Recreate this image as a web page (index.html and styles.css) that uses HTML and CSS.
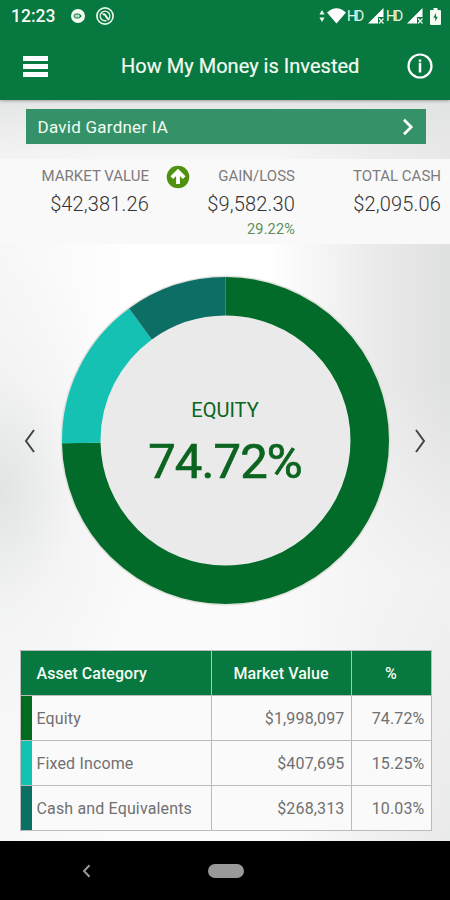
FILE: index.html
```html
<!DOCTYPE html>
<html lang="en">
<head>
  <meta charset="UTF-8" />
  <meta name="viewport" content="width=device-width, initial-scale=1" />
  <title>How My Money is Invested</title>
  <link rel="stylesheet" href="styles.css">
</head>
<body>
  <div class="top">
    <div class="status">
      <span class="clock">12:23</span>
      <svg class="notif" width="14" height="14" viewBox="0 0 14 14">
        <circle cx="7" cy="7" r="7" fill="#f4fbf2"/>
        <rect x="3.200" y="5" width="6" height="4" rx="1.800" fill="#b9d8c0" stroke="#067840" stroke-width="1"/>
        <path d="M9 5.500L11 7 9 8.500z" fill="#067840"/>
      </svg>
      <svg class="notif" width="18" height="18" viewBox="0 0 18 18" fill="none" stroke="#e8f6e8">
        <circle cx="9" cy="9" r="8.100" stroke-width="1.700"/>
        <path d="M5.500 12.300a4.800 4.800 0 1 1 7 0M5.500 12.300a4.800 4.800 0 0 0 5 1.200" stroke-width="1.500"/>
        <path d="M6.500 7.500q2-1 3 1t3.500 4.500" stroke-width="2"/>
      </svg>
      <div class="signals">
        <svg width="6" height="14" viewBox="0 0 6 14" fill="#e8f6e8"><path d="M3 1l2.600 4.500H.4zM3 13L.4 8.500h5.200z"/></svg>
        <svg class="wifi" width="19" height="16" viewBox="0 0 19 16" fill="#fff"><path d="M0 4.500Q9.500-4 19 4.500L9.500 15.500z"/></svg>
        <span class="hd">HD</span>
        <svg class="bars" width="17" height="16" viewBox="0 0 17 16"><path d="M0 15.500L15.500 0v9H10v6.500z" fill="#fff"/><path d="M11 10.500l4.500 5M15.500 10.500l-4.500 5" stroke="#dff2e2" stroke-width="1.300"/></svg>
        <span class="hd">HD</span>
        <svg class="bars" width="17" height="16" viewBox="0 0 17 16"><path d="M0 15.500L15.500 0v9H10v6.500z" fill="#fff"/><path d="M11 10.500l4.500 5M15.500 10.500l-4.500 5" stroke="#dff2e2" stroke-width="1.300"/></svg>
        <svg class="battery" width="11" height="17" viewBox="0 0 11 17"><path d="M3.500 0h4v2H10q1 0 1 1v13q0 1-1 1H1q-1 0-1-1V3q0-1 1-1h2.500z" fill="#f4fbf2"/><path d="M6 5L3.400 9.800h1.900v3.700L7.800 8.700H6z" fill="#067840"/></svg>
      </div>
    </div>
    <div class="header">
      <div class="menu"><i></i><i></i><i></i></div>
      <h1>How My Money is Invested</h1>
      <svg class="info" width="26" height="26" viewBox="0 0 26 26">
        <circle cx="13" cy="13" r="11.500" fill="none" stroke="#fff" stroke-width="2.200"/>
        <path d="M13 6.500v2.300M13 9.800v9.700" stroke="#fff" stroke-width="2.500"/>
      </svg>
    </div>
  </div>

  <div class="content">
    <div class="account">
      <span>David Gardner IA</span>
      <svg width="12" height="18" viewBox="0 0 12 18"><path d="M2 1.800L9.200 9 2 16.200" fill="none" stroke="#fff" stroke-width="2.700"/></svg>
    </div>

    <div class="stats">
      <div class="stat">
        <h2>MARKET VALUE</h2>
        <p>$42,381.26</p>
      </div>
      <div class="stat">
        <svg class="gain" width="24" height="24" viewBox="0 0 24 24">
          <circle cx="12" cy="12" r="11.300" fill="#50920f"/>
          <path d="M12 19V7M5.800 12.700L12 6.500l6.200 6.200" fill="none" stroke="#fff" stroke-width="3.800"/>
        </svg>
        <h2>GAIN/LOSS</h2>
        <p>$9,582.30</p>
        <p class="change">29.22%</p>
      </div>
      <div class="stat">
        <h2>TOTAL CASH</h2>
        <p>$2,095.06</p>
      </div>
    </div>

    <div class="chart">
      <svg class="arrow" width="12" height="24" viewBox="0 0 12 24"><path d="M10 1L2 12l8 11"/></svg>
      <div class="donut">
        <svg width="331" height="331" viewBox="0 0 331 331">
          <circle cx="165.500" cy="165.500" r="165" fill="#e0e0dc"/>
          <circle cx="165.500" cy="165.500" r="126" fill="#eaeaea"/>
          <g class="ring" transform="rotate(-90 165.500 165.500)">
            <circle cx="165.500" cy="165.500" r="144.250" pathLength="100" stroke="#036b29" stroke-dasharray="74.720 25.280"/>
            <circle cx="165.500" cy="165.500" r="144.250" pathLength="100" stroke="#15c1b3" stroke-dasharray="15.250 84.750" stroke-dashoffset="-74.720"/>
            <circle cx="165.500" cy="165.500" r="144.250" pathLength="100" stroke="#0c6e64" stroke-dasharray="10.030 89.970" stroke-dashoffset="-89.970"/>
          </g>
        </svg>
        <div class="label">
          <h3>EQUITY</h3>
          <p>74.72%</p>
        </div>
      </div>
      <svg class="arrow" width="12" height="24" viewBox="0 0 12 24"><path d="M2 1l8 11-8 11"/></svg>
    </div>

    <table>
      <thead>
        <tr>
          <th>Asset Category</th>
          <th>Market Value</th>
          <th>%</th>
        </tr>
      </thead>
      <tbody>
        <tr class="equity">
          <td>Equity</td>
          <td>$1,998,097</td>
          <td>74.72%</td>
        </tr>
        <tr class="fixed">
          <td>Fixed Income</td>
          <td>$407,695</td>
          <td>15.25%</td>
        </tr>
        <tr class="cash">
          <td>Cash and Equivalents</td>
          <td>$268,313</td>
          <td>10.03%</td>
        </tr>
      </tbody>
    </table>
  </div>

  <div class="navbar">
    <svg width="9" height="14" viewBox="0 0 9 14"><path d="M7.500 1.200L2 7l5.500 5.800" fill="none" stroke="#999" stroke-width="2"/></svg>
    <div class="pill"></div>
  </div>
</body>
</html>
```

FILE: styles.css
```css
* { box-sizing: border-box; }
body { font-family: Roboto, "Liberation Sans", sans-serif; margin: 0; height: 900px; display: flex; flex-direction: column; overflow: hidden; background: #000; }
h1, h2, h3, p { margin: 0; font-weight: 400; white-space: nowrap; }
svg { display: block; flex: none; }

.top { height: 100px; background: #067840; color: #f4fbf2; z-index: 1; box-shadow: 0 1px 3px rgba(0,0,0,0.3); }
.status { display: flex; align-items: center; height: 32px; padding: 0 9px 0 11px; }
.clock { width: 60px; font-size: 17.5px; font-weight: 500; }
.notif + .notif { margin-left: 11px; }
.signals { display: flex; align-items: center; margin-left: auto; }
.wifi { margin-left: 2px; }
.hd { width: 16px; margin-left: 1px; font-size: 14px; letter-spacing: -1.9px; color: #e8f6e8; }
.bars { margin-left: 5px; }
.battery { margin-left: 6px; }
.header { display: flex; align-items: center; height: 68px; padding: 0 17px 0 23px; }
.menu { display: flex; flex-direction: column; gap: 3px; width: 25px; }
.menu i { height: 5px; background: #fff; }
.header h1 { margin-left: 73px; font-size: 20px; letter-spacing: 0.02px; -webkit-text-stroke: 0.2px #f4fbf2; }
.info { margin-left: auto; }

.content {
  height: 741px;
  background:
    radial-gradient(ellipse 150px 240px at 0 390px, rgba(218,222,220,0.75), rgba(236,237,237,0.4) 50%, rgba(255,255,255,0)),
    linear-gradient(180deg, rgba(226,228,227,0.9), rgba(240,240,240,0.5) 60px, rgba(255,255,255,0) 150px),
    linear-gradient(180deg, rgba(248,248,248,0) 280px, rgba(248,248,248,0.7) 480px, rgba(248,248,248,0.4)),
    linear-gradient(90deg, #f7f7f7, #fff 30%, #fff 60%, #e9eae9 84%, #dfe1e0);
}
.account { display: flex; align-items: center; justify-content: space-between; width: 400px; height: 35px; margin: 9px 0 15px 25.5px; padding: 0 12px; background: #359268; color: #f4fbf2; font-size: 17px; letter-spacing: 0.25px; }
.stats { display: grid; grid-template-columns: 149px 146px 146px; height: 85px; background: #f9f9f9; }
.stat { position: relative; padding-top: 7px; text-align: right; }
.stat h2 { font-size: 15px; line-height: 20px; color: #7c7c7c; }
.stat p { margin-top: 4px; font-size: 20px; line-height: 28px; font-weight: 300; color: #333; letter-spacing: 0.15px; }
.stat .change { margin-top: 2px; font-size: 14.5px; line-height: 20px; font-weight: 400; color: #5c8f5c; }
.gain { position: absolute; left: 17px; top: 6px; }

.chart { display: flex; align-items: center; justify-content: space-between; height: 393px; padding: 0 24px; }
.arrow { fill: none; stroke: #444; stroke-width: 2; }
.donut { display: grid; place-items: center; }
.donut > * { grid-area: 1 / 1; }
.ring { fill: none; stroke-width: 38.5px; }
.label { padding-top: 7px; text-align: center; color: #0b6520; }
.label h3 { font-size: 20px; line-height: 24px; }
.label p { margin-top: 11px; font-size: 49px; line-height: 58px; letter-spacing: -0.9px; -webkit-text-stroke: 0.7px #0b6520; }

table { width: 412px; margin: 13px 0 0 19.5px; border-collapse: collapse; table-layout: fixed; background: #fafafa; }
th, td { height: 45px; padding: 0 6px; border: 1px solid #bbb; font-size: 16px; text-align: right; letter-spacing: 0.15px; color: #707070; white-space: nowrap; }
th { background: #067840; color: #f4fbf2; font-weight: 500; text-align: center; letter-spacing: 0.05px; }
th:first-child { width: 191px; padding-left: 16px; text-align: left; }
th:nth-child(2) { width: 140px; }
td:first-child { padding-left: 16px; text-align: left; background-repeat: no-repeat; background-size: 11px 100%; }
.equity td:first-child { background-image: linear-gradient(#036b1f, #036b1f); }
.fixed td:first-child { background-image: linear-gradient(#12c3b4, #12c3b4); }
.cash td:first-child { background-image: linear-gradient(#0b7064, #0b7064); }

.navbar { display: flex; align-items: center; height: 59px; padding-left: 82px; }
.pill { width: 36px; height: 14px; margin-left: 117px; border-radius: 7px; background: #999; }
```
